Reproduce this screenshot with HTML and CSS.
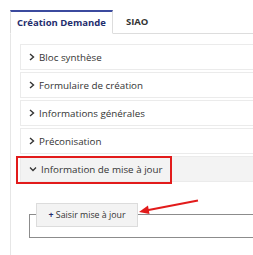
FILE: index.html
```html
<!DOCTYPE html>
<html>
<head>
    <title>Création Demande</title>
    <link rel="stylesheet" href="styles.css">
</head>
<body>
    <div class="tabs">
        <div class="tab active">Création Demande</div>
        <div class="tab">SIAO</div>
        <div class="tab-fill"></div>
    </div>

    <div class="panel">
        <div class="item">
            <svg class="chev" width="6" height="8" viewBox="0 0 6 8"><path d="M1 1 L4.5 4 L1 7" fill="none" stroke="#333" stroke-width="1.4"/></svg>
            <span>Bloc synthèse</span>
        </div>
        <div class="item">
            <svg class="chev" width="6" height="8" viewBox="0 0 6 8"><path d="M1 1 L4.5 4 L1 7" fill="none" stroke="#333" stroke-width="1.4"/></svg>
            <span>Formulaire de création</span>
        </div>
        <div class="item">
            <svg class="chev" width="6" height="8" viewBox="0 0 6 8"><path d="M1 1 L4.5 4 L1 7" fill="none" stroke="#333" stroke-width="1.4"/></svg>
            <span>Informations générales</span>
        </div>
        <div class="item">
            <svg class="chev" width="6" height="8" viewBox="0 0 6 8"><path d="M1 1 L4.5 4 L1 7" fill="none" stroke="#333" stroke-width="1.4"/></svg>
            <span>Préconisation</span>
        </div>
        <div class="item open">
            <svg class="chev" width="8" height="6" viewBox="0 0 8 6"><path d="M1 1.5 L4 4.5 L7 1.5" fill="none" stroke="#333" stroke-width="1.3"/></svg>
            <span>Information de mise à jour</span>
            <div class="highlight"></div>
        </div>

        <div class="body">
            <div class="group">
                <button class="add"><span class="plus">+</span> Saisir mise à jour</button>
                <svg class="arrow" width="62" height="16" viewBox="0 0 62 16">
                    <line x1="60" y1="1.5" x2="8" y2="11.5" stroke="#e21b1b" stroke-width="2"/>
                    <path d="M1 13 L10 6.5 L11.5 15 Z" fill="#e21b1b"/>
                </svg>
            </div>
        </div>
    </div>
</body>
</html>
```

FILE: styles.css
```css
body {
    margin: 0;
    font-family: "Open Sans", sans-serif;
    font-size: 9.8px;
    color: #333;
    width: 253px;
    height: 255px;
    overflow: hidden;
}
.tabs {
    display: flex;
    padding: 10px 0 0 10px;
}
.tab {
    height: 23px;
    line-height: 23px;
    font-weight: bold;
    font-size: 9.5px;
    color: #333;
    border-bottom: 1px solid #ddd;
}
.tab.active {
    padding: 0 6px;
    color: #1f2d6e;
    border-top: 2px solid #3b4a9e;
    border-left: 1px solid #ddd;
    border-right: 1px solid #ddd;
    border-bottom: 1px solid transparent;
    height: 21px;
    line-height: 21px;
}
.tab + .tab {
    padding: 0 13px;
}
.tab-fill {
    flex: 1;
    border-bottom: 1px solid #ddd;
}
.panel {
    margin-left: 10px;
    border-left: 1px solid #e6e6e6;
    padding: 10px 0 0 9px;
    height: 300px;
}
.item {
    position: relative;
    display: flex;
    align-items: center;
    gap: 4px;
    height: 24px;
    padding-left: 8px;
    margin-bottom: 2px;
    border: 1px solid #ebebeb;
    border-right: none;
    color: #333;
}
.item.open {
    background: #f3f3f3;
    margin-bottom: 0;
}
.chev {
    flex: none;
}
.highlight {
    position: absolute;
    left: -5px;
    top: -1px;
    width: 152px;
    height: 24px;
    border: 2px solid #e21b1b;
}
.body {
    padding: 32px 0 0 9px;
}
.group {
    position: relative;
    height: 22px;
    border: 1px solid #8c8c8c;
    border-right: none;
}
.add {
    position: absolute;
    left: 6px;
    top: -12px;
    width: 102px;
    height: 24px;
    padding: 0;
    background: #f3f3f3;
    border: 1px solid #dcdcdc;
    font-family: "Open Sans", sans-serif;
    font-size: 8.8px;
    color: #333;
}
.plus {
    color: #1f2d6e;
    font-weight: bold;
}
.arrow {
    position: absolute;
    left: 108px;
    top: -16px;
}
```
